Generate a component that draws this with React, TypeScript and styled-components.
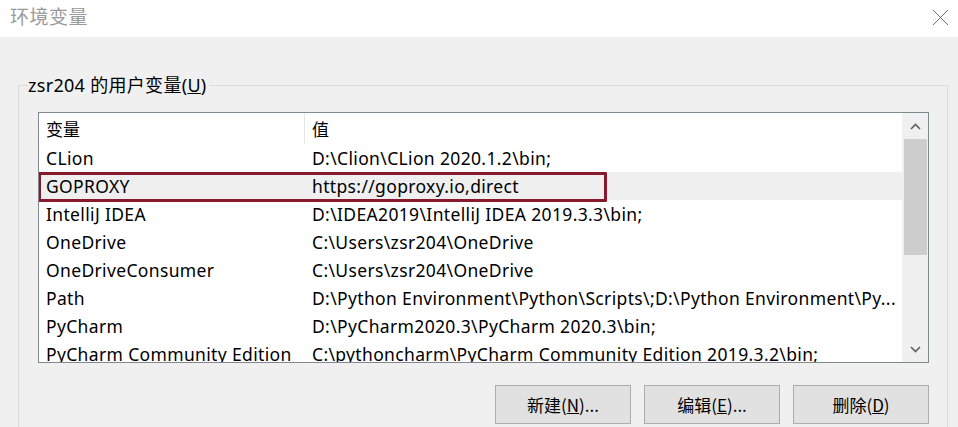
import React from 'react'
import styled, { createGlobalStyle } from 'styled-components'

const GlobalStyle = createGlobalStyle`
  html, body {
    margin: 0;
    padding: 0;
    width: 958px;
    height: 427px;
    overflow: hidden;
    background: #f0f0f0;
    font-family: 'Noto Sans', 'Noto Sans CJK SC', sans-serif;
  }
`

// window
const Window = styled.div`
  width: 958px;
  height: 427px;
  display: flex;
  flex-direction: column;
  overflow: hidden;
  background: #f0f0f0;
`

// title bar
const TitleBar = styled.div`
  height: 37px;
  flex-shrink: 0;
  background: #ffffff;
  display: flex;
  align-items: center;
  justify-content: space-between;
  padding: 0 9px 6px 10px;
  box-sizing: border-box;
`
const Title = styled.div`
  font-family: 'Noto Sans CJK SC', sans-serif;
  font-size: 19px;
  color: #9a9a9a;
  letter-spacing: 0.5px;
`
const CloseButton = styled.div`
  width: 17px;
  height: 17px;
  display: flex;
  margin-top: 4px;
`

// body
const Body = styled.div`
  flex: 1;
  padding: 37px 10px 0 18px;
`

// group box
const GroupBox = styled.fieldset`
  margin: 0;
  padding: 16px 18px 40px 19px;
  border: 1px solid #dcdcdc;
  min-height: 400px;
`
const GroupLabel = styled.legend`
  margin-left: -10px;
  padding: 0 2px 0 0;
  font-size: 18px;
  line-height: 22px;
  letter-spacing: 0.3px;
  color: #000;
`

// list box
const ListBox = styled.div`
  height: 249px;
  border: 1px solid #828790;
  background: #fff;
  display: flex;
  overflow: hidden;
`
const ListBody = styled.div`
  flex: 1;
  min-width: 0;
  display: flex;
  flex-direction: column;
  overflow: hidden;
`
const HeaderRow = styled.div`
  height: 31px;
  flex-shrink: 0;
  display: grid;
  grid-template-columns: 266px 1fr;
  align-items: center;
  font-size: 17px;
  color: #000;
`
const HeaderCell = styled.div<{ divider?: boolean }>`
  height: 100%;
  display: flex;
  align-items: center;
  padding-left: 7px;
  box-sizing: border-box;
  border-right: ${props => (props.divider ? '1px solid #e5e5e5' : 'none')};
  font-family: 'Noto Sans CJK SC', sans-serif;
`
const Row = styled.div<{ selected?: boolean }>`
  height: 28px;
  flex-shrink: 0;
  display: grid;
  grid-template-columns: 266px 1fr;
  align-items: center;
  background: ${props => (props.selected ? '#efefef' : 'transparent')};
  position: relative;
`
const Cell = styled.div`
  padding-left: 7px;
  font-size: 17.5px;
  letter-spacing: 0.35px;
  color: #000;
  white-space: nowrap;
  overflow: hidden;
`
// red annotation box drawn over the selected row
const Highlight = styled.div`
  position: absolute;
  left: -1px;
  top: 0;
  width: 569px;
  height: 30px;
  border: 3px solid #891a2e;
  box-sizing: border-box;
  border-radius: 1px;
`

// scrollbar
const ScrollBar = styled.div`
  width: 26px;
  flex-shrink: 0;
  background: #f0f0f0;
  display: flex;
  flex-direction: column;
  align-items: center;
`
const ScrollArrow = styled.div`
  height: 26px;
  width: 100%;
  display: flex;
  align-items: center;
  justify-content: center;
  flex-shrink: 0;
`
const ScrollTrack = styled.div`
  flex: 1;
  width: 100%;
  display: flex;
  justify-content: center;
`
const ScrollThumb = styled.div`
  width: 23px;
  height: 116px;
  background: #cdcdcd;
`

// buttons
const ButtonRow = styled.div`
  display: flex;
  justify-content: flex-end;
  gap: 13px;
  margin-top: 22px;
`
const Button = styled.button`
  width: 136px;
  height: 39px;
  background: #e1e1e1;
  border: 1px solid #adadad;
  font-family: 'Noto Sans CJK SC', sans-serif;
  font-size: 17px;
  color: #000;
  padding: 0;
  cursor: default;
`

const rows: { name: string; value: string }[] = [
  { name: 'CLion', value: 'D:\\Clion\\CLion 2020.1.2\\bin;' },
  { name: 'GOPROXY', value: 'https://goproxy.io,direct' },
  { name: 'IntelliJ IDEA', value: 'D:\\IDEA2019\\IntelliJ IDEA 2019.3.3\\bin;' },
  { name: 'OneDrive', value: 'C:\\Users\\zsr204\\OneDrive' },
  { name: 'OneDriveConsumer', value: 'C:\\Users\\zsr204\\OneDrive' },
  {
    name: 'Path',
    value: 'D:\\Python Environment\\Python\\Scripts\\;D:\\Python Environment\\Py...',
  },
  { name: 'PyCharm', value: 'D:\\PyCharm2020.3\\PyCharm 2020.3\\bin;' },
  {
    name: 'PyCharm Community Edition',
    value: 'C:\\pythoncharm\\PyCharm Community Edition 2019.3.2\\bin;',
  },
]

const Chevron: React.FC<{ up?: boolean }> = ({ up }) => (
  <svg width='11' height='7' viewBox='0 0 11 7'>
    <path
      d={up ? 'M1 6 L5.5 1.5 L10 6' : 'M1 1 L5.5 5.5 L10 1'}
      fill='none'
      stroke='#606060'
      strokeWidth='1.6'
    />
  </svg>
)

const App: React.FC = () => {
  return (
    <Window>
      <GlobalStyle />
      <TitleBar>
        <Title>环境变量</Title>
        <CloseButton>
          <svg width='17' height='17' viewBox='0 0 17 17'>
            <path d='M1 1 L16 16 M16 1 L1 16' stroke='#707070' strokeWidth='1' fill='none' />
          </svg>
        </CloseButton>
      </TitleBar>
      <Body>
        <GroupBox>
          <GroupLabel>
            zsr204 的用户变量(<u>U</u>)
          </GroupLabel>
          <ListBox>
            <ListBody>
              <HeaderRow>
                <HeaderCell divider>变量</HeaderCell>
                <HeaderCell>值</HeaderCell>
              </HeaderRow>
              {rows.map(row => (
                <Row key={row.name} selected={row.name === 'GOPROXY'}>
                  <Cell>{row.name}</Cell>
                  <Cell>{row.value}</Cell>
                  {row.name === 'GOPROXY' && <Highlight />}
                </Row>
              ))}
            </ListBody>
            <ScrollBar>
              <ScrollArrow>
                <Chevron up />
              </ScrollArrow>
              <ScrollTrack>
                <ScrollThumb />
              </ScrollTrack>
              <ScrollArrow>
                <Chevron />
              </ScrollArrow>
            </ScrollBar>
          </ListBox>
          <ButtonRow>
            <Button>
              新建(<u>N</u>)...
            </Button>
            <Button>
              编辑(<u>E</u>)...
            </Button>
            <Button>
              删除(<u>D</u>)
            </Button>
          </ButtonRow>
        </GroupBox>
      </Body>
    </Window>
  )
}

export default App
